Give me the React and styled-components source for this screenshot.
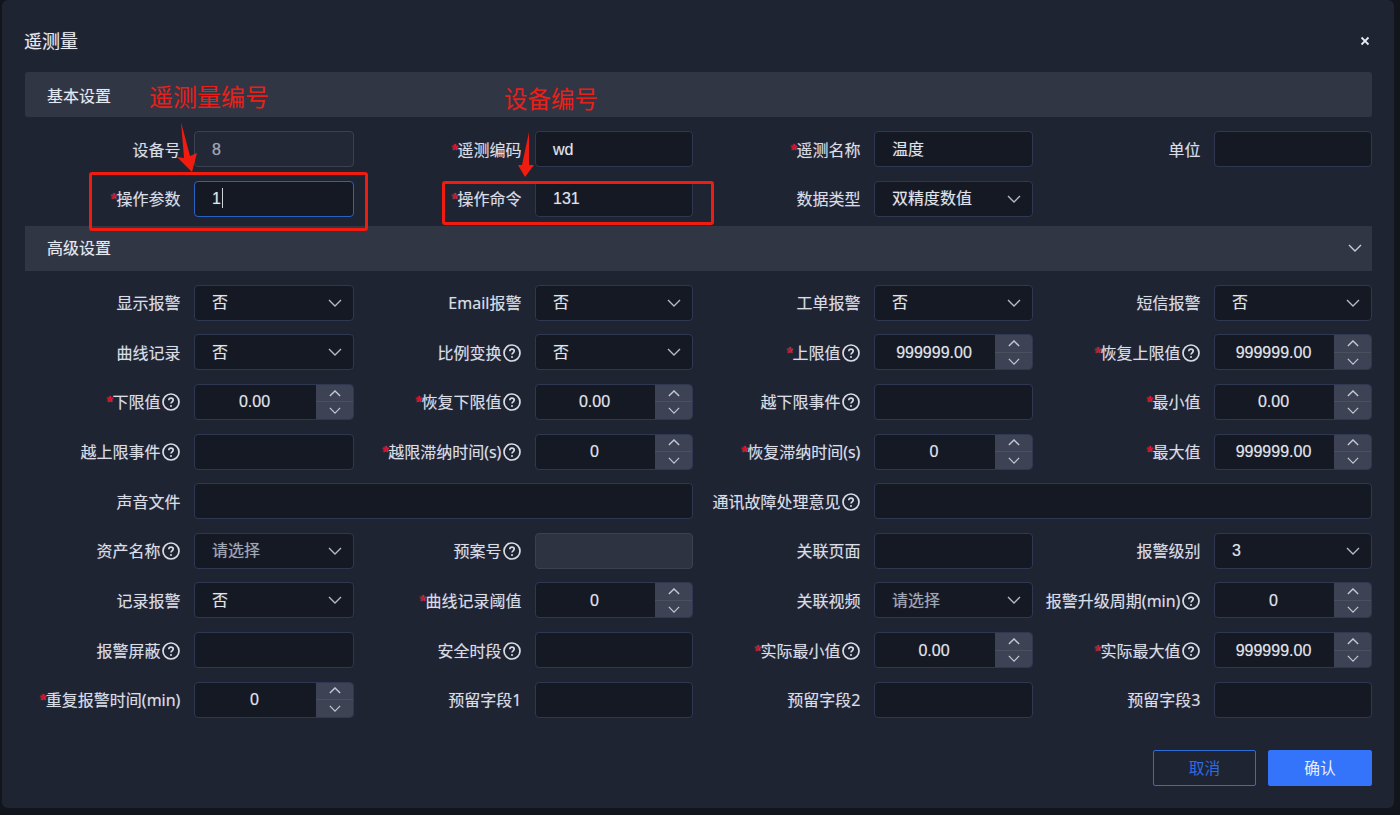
import React from 'react';
import styled, { createGlobalStyle } from 'styled-components';

const Global = createGlobalStyle`
  html, body { margin: 0; padding: 0; background: #12151c; }
  body { font-family: "Liberation Sans", "Noto Sans CJK SC", sans-serif; }
  * { box-sizing: border-box; }
`;

const Page = styled.div`
  position: relative;
  width: 1400px;
  height: 815px;
  overflow: hidden;
  padding-left: 2px;
`;
const Modal = styled.div`
  width: 1392px;
  height: 808px;
  background: #1f2433;
  border-radius: 6px;
  padding: 0 22px 22px 23px;
  color: #e6e9ef;
  text-shadow: 0 0 1px rgba(225, 230, 240, 0.4);
`;
const Header = styled.header`
  height: 72px;
  display: flex;
  align-items: center;
  justify-content: space-between;
  padding: 10px 0 0 0;
`;
const Title = styled.h1`
  margin: 0;
  font-size: 18px;
  font-weight: 400;
  color: #e6e9ef;
  line-height: 24px;
  padding-top: 2px;
  position: relative;
  left: -1px;
`;
const Close = styled.span`
  width: 12px;
  height: 12px;
  margin-right: 1px;
  display: flex;
`;
const SectionBar = styled.div`
  height: 45px;
  background: #313645;
  border-radius: ${p => (p.$open ? '3px' : '0')};
  display: flex;
  align-items: center;
  justify-content: space-between;
  padding: ${p => (p.$open ? '3px' : '0')} 10px 0 22px;
  font-size: 16px;
  line-height: 43px;
  color: #e6e9ef;
  margin-top: ${p => p.$mt || 0}px;
`;
const FormGrid = styled.div`
  display: grid;
  grid-template-columns: 169px 160px 181px 158px 181px 159px 181px 158px;
  grid-auto-rows: 36px;
  row-gap: 13.625px;
  margin-top: 14px;
`;
const Label = styled.label`
  display: flex;
  align-items: center;
  justify-content: flex-end;
  padding: 1px 13.6px 0 0;
  font-family: "Noto Sans", "Noto Sans CJK SC", sans-serif;
  font-size: 16px;
  line-height: 34px;
  height: 36px;
  color: #d9dde5;
  white-space: nowrap;
`;
const Star = styled.span`
  color: #d3122a;
  font-family: "Liberation Sans", sans-serif;
  font-weight: 700;
  margin-right: -0.5px;
  position: relative;
  top: 1px;
`;
const HelpIcon = styled.svg`
  width: 18px;
  height: 18px;
  margin-left: 2px;
  flex: none;
`;
const FieldBox = styled.div`
  position: relative;
  height: 36px;
  grid-column: ${p => (p.$span ? `span ${p.$span}` : 'auto')};
  border: 1px solid ${p => (p.$focus ? '#2a62c4' : p.$disabled ? '#3b4150' : '#2f3850')};
  border-radius: 4px;
  background: ${p => (p.$disabled ? (p.$filled ? '#2d3340' : '#232837') : '#141924')};
  display: flex;
  align-items: center;
  font-size: 16px;
  line-height: 32px;
  overflow: hidden;
`;
const Value = styled.span`
  flex: 1;
  padding: 1px 0 0 17px;
  color: ${p => (p.$muted ? '#a0a8b6' : '#e0e4ea')};
  white-space: nowrap;
`;
const Caret = styled.i`
  display: inline-block;
  width: 1px;
  height: 20px;
  background: #cfd4dc;
  vertical-align: -4px;
  margin-left: 1px;
`;
const NumValue = styled.span`
  flex: 1;
  text-align: center;
  color: #e0e4ea;
  padding: 1px 2px 0 0;
`;
const Spinner = styled.div`
  flex: 0 0 37px;
  height: 100%;
  background: #3d4354;
  display: flex;
  flex-direction: column;
`;
const SpinBtn = styled.div`
  flex: 1;
  display: flex;
  align-items: center;
  justify-content: center;
  border-top: ${p => (p.$bottom ? '1px solid #4c4f5c' : 'none')};
`;
const Chevron = styled.svg`
  width: ${p => p.$w || 14}px;
  height: ${p => p.$h || 8}px;
  flex: none;
  margin-right: ${p => p.$mr || 0}px;
`;
const Footer = styled.footer`
  margin-top: 32px;
  display: flex;
  justify-content: flex-end;
  gap: 12px;
`;
const Button = styled.button`
  width: ${p => (p.$primary ? 104 : 103)}px;
  height: 36px;
  font: inherit;
  font-size: 15.75px;
  border-radius: 2px;
  border: 1px solid ${p => (p.$primary ? '#3374fb' : '#2f6cd6')};
  background: ${p => (p.$primary ? '#3374fb' : 'transparent')};
  color: ${p => (p.$primary ? '#e9eefb' : '#2f6be0')};
`;
const AnnoBox = styled.div`
  position: absolute;
  left: ${p => p.$x}px;
  top: ${p => p.$y}px;
  width: ${p => p.$w}px;
  height: ${p => p.$h}px;
  border: 3px solid #f01c10;
  border-radius: 3px;
  pointer-events: none;
`;
const AnnoText = styled.span`
  position: absolute;
  left: ${p => p.$x}px;
  top: ${p => p.$y}px;
  font-size: ${p => p.$size}px;
  line-height: 1;
  font-weight: 400;
  color: #e8201a;
  white-space: nowrap;
  font-family: "Noto Sans CJK SC", sans-serif;
`;
const AnnoArrows = styled.svg`
  position: absolute;
  left: 0;
  top: 0;
  width: 1400px;
  height: 815px;
  pointer-events: none;
`;

const Down = ({ w = 14, h = 8, mr, stroke = '#b4bac6' }) => (
  <Chevron $w={w} $h={h} $mr={mr} viewBox="0 0 14 8" fill="none">
    <path d="M1 1l6 6 6-6" stroke={stroke} strokeWidth="1.4" />
  </Chevron>
);
const Up = () => (
  <Chevron $w={12} $h={7} viewBox="0 0 14 8" fill="none">
    <path d="M1 7l6-6 6 6" stroke="#c3c8d2" strokeWidth="1.6" />
  </Chevron>
);
const Help = () => (
  <HelpIcon viewBox="0 0 18 18" fill="none">
    <circle cx="9" cy="9" r="8" stroke="#d9dde5" strokeWidth="1.7" />
    <path d="M6.8 7.2c0-1.3 1-2.1 2.2-2.1s2.2.8 2.2 2c0 1.7-2.2 1.7-2.2 3.4" stroke="#d9dde5" strokeWidth="1.7" />
    <circle cx="9" cy="13" r="1" fill="#d9dde5" />
  </HelpIcon>
);

const Item = ({ f }) => {
  if (!f) return (<><span /><span /></>);
  const { l, req, help, t = 'text', v, span, disabled, focus, muted, filled } = f;
  return (
    <>
      <Label>
        {req && <Star>*</Star>}
        {l}
        {help && <Help />}
      </Label>
      <FieldBox $span={span} $disabled={disabled} $focus={focus} $filled={filled}>
        {t === 'num' ? (
          <>
            <NumValue>{v}</NumValue>
            <Spinner>
              <SpinBtn><Up /></SpinBtn>
              <SpinBtn $bottom><Down w={12} h={7} stroke="#c3c8d2" /></SpinBtn>
            </Spinner>
          </>
        ) : (
          <>
            <Value $muted={muted || disabled}>{v}{focus && <Caret />}</Value>
            {t === 'sel' && <Down mr={11} />}
          </>
        )}
      </FieldBox>
    </>
  );
};

const basic = [
  { l: '设备号', v: '8', disabled: true },
  { l: '遥测编码', req: true, v: 'wd' },
  { l: '遥测名称', req: true, v: '温度' },
  { l: '单位' },
  { l: '操作参数', req: true, v: '1', focus: true },
  { l: '操作命令', req: true, v: '131' },
  { l: '数据类型', t: 'sel', v: '双精度数值' },
  null,
];
const no = { t: 'sel', v: '否' };
const adv = [
  { l: '显示报警', ...no },
  { l: 'Email报警', ...no },
  { l: '工单报警', ...no },
  { l: '短信报警', ...no },
  { l: '曲线记录', ...no },
  { l: '比例变换', help: true, ...no },
  { l: '上限值', req: true, help: true, t: 'num', v: '999999.00' },
  { l: '恢复上限值', req: true, help: true, t: 'num', v: '999999.00' },
  { l: '下限值', req: true, help: true, t: 'num', v: '0.00' },
  { l: '恢复下限值', req: true, help: true, t: 'num', v: '0.00' },
  { l: '越下限事件', help: true },
  { l: '最小值', req: true, t: 'num', v: '0.00' },
  { l: '越上限事件', help: true },
  { l: '越限滞纳时间(s)', req: true, help: true, t: 'num', v: '0' },
  { l: '恢复滞纳时间(s)', req: true, t: 'num', v: '0' },
  { l: '最大值', req: true, t: 'num', v: '999999.00' },
  { l: '声音文件', span: 3 },
  { l: '通讯故障处理意见', help: true, span: 3 },
  { l: '资产名称', help: true, t: 'sel', v: '请选择', muted: true },
  { l: '预案号', help: true, disabled: true, filled: true },
  { l: '关联页面' },
  { l: '报警级别', t: 'sel', v: '3' },
  { l: '记录报警', ...no },
  { l: '曲线记录阈值', req: true, t: 'num', v: '0' },
  { l: '关联视频', t: 'sel', v: '请选择', muted: true },
  { l: '报警升级周期(min)', help: true, t: 'num', v: '0' },
  { l: '报警屏蔽', help: true },
  { l: '安全时段', help: true },
  { l: '实际最小值', req: true, help: true, t: 'num', v: '0.00' },
  { l: '实际最大值', req: true, help: true, t: 'num', v: '999999.00' },
  { l: '重复报警时间(min)', req: true, t: 'num', v: '0' },
  { l: '预留字段1' },
  { l: '预留字段2' },
  { l: '预留字段3' },
];

export default function App() {
  return (
    <Page>
      <Global />
      <Modal>
        <Header>
          <Title>遥测量</Title>
          <Close>
            <svg width="12" height="12" viewBox="0 0 12 12" fill="none">
              <path d="M2.5 2.5l7 7M9.5 2.5l-7 7" stroke="#e6e9ef" strokeWidth="1.8" />
            </svg>
          </Close>
        </Header>
        <SectionBar $open>基本设置</SectionBar>
        <FormGrid>{basic.map((f, i) => <Item key={i} f={f} />)}</FormGrid>
        <SectionBar $mt={9}>
          高级设置
          <Down w={14} h={8} stroke="#c8cdd6" />
        </SectionBar>
        <FormGrid>{adv.map((f, i) => <Item key={i} f={f} />)}</FormGrid>
        <Footer>
          <Button>取消</Button>
          <Button $primary>确认</Button>
        </Footer>
      </Modal>
      <AnnoText $x={149} $y={84} $size={24}>遥测量编号</AnnoText>
      <AnnoText $x={504} $y={87} $size={23.5}>设备编号</AnnoText>
      <AnnoBox $x={89} $y={172} $w={279} $h={59} />
      <AnnoBox $x={442} $y={181} $w={272} $h={44} />
      <AnnoArrows viewBox="0 0 1400 815">
        <polygon points="181,122 190,156 197,153 192,172 177,157 184,158" fill="#f01c10" />
        <polygon points="529,132 529,165 534,165 525,177 518,165 522,165" fill="#f01c10" />
      </AnnoArrows>
    </Page>
  );
}
